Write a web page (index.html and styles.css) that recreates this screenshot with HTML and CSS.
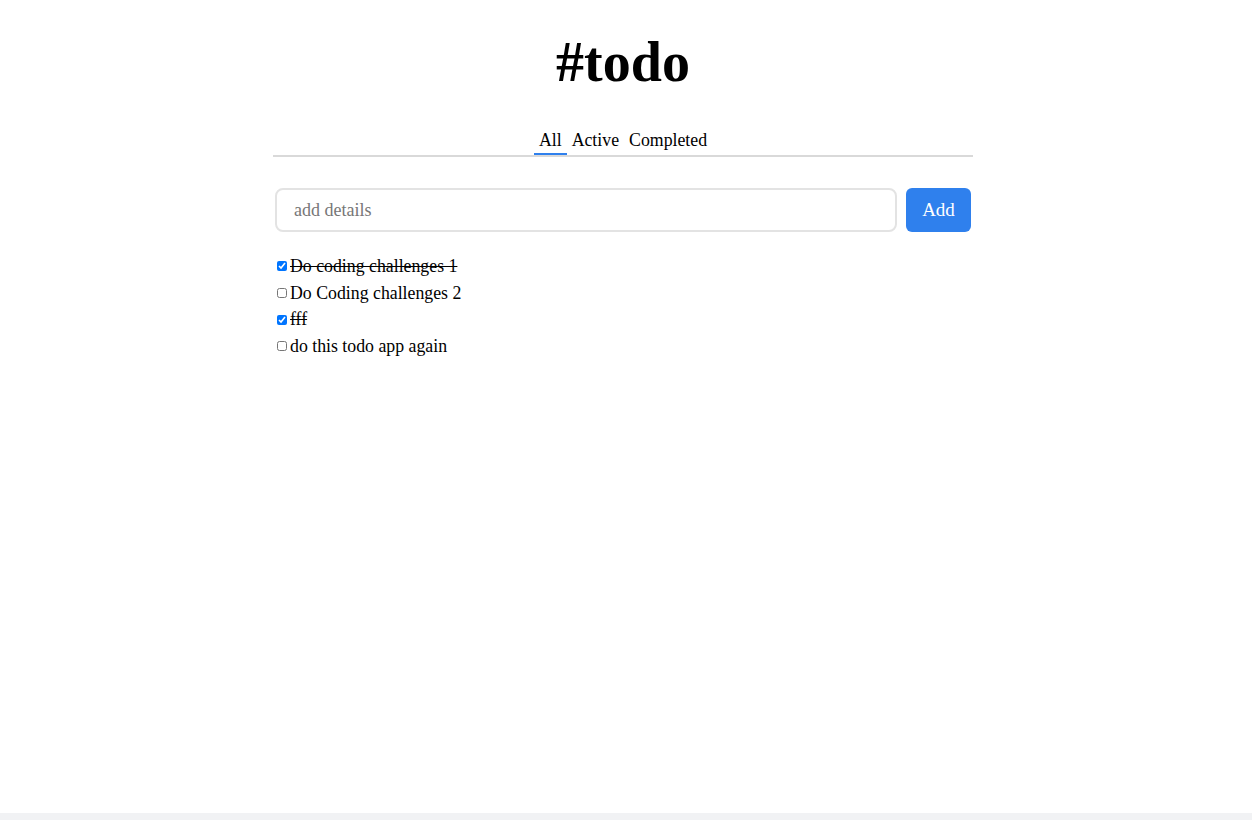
FILE: index.html
```html
<!DOCTYPE html>
<html lang="en">
<head>
<meta charset="utf-8">
<title>#todo</title>
<link rel="stylesheet" href="styles.css">
</head>
<body>
<div class="page">
  <div class="app">
    <h1 class="title">#todo</h1>
    <nav class="tabs">
      <span class="tab tab-active">All</span>
      <span class="tab">Active</span>
      <span class="tab">Completed</span>
    </nav>
    <form class="add-form">
      <input class="add-input" type="text" placeholder="add details">
      <button class="add-btn" type="button">Add</button>
    </form>
    <ul class="list">
      <li class="item done"><input type="checkbox" checked><span>Do coding challenges 1</span></li>
      <li class="item"><input type="checkbox"><span>Do Coding challenges 2</span></li>
      <li class="item done"><input type="checkbox" checked><span>fff</span></li>
      <li class="item"><input type="checkbox"><span>do this todo app again</span></li>
    </ul>
  </div>
</div>
</body>
</html>
```

FILE: styles.css
```css
html {
  background: #f1f2f4;
}
body {
  margin: 0;
  font-family: "Liberation Serif", "Times New Roman", serif;
  color: #000;
}
.page {
  background: #fff;
  min-height: 813px;
  padding-right: 6px;
  padding-top: 30px;
  box-sizing: border-box;
}
.app {
  width: 700px;
  margin: 0 auto;
}
.title {
  margin: 0;
  text-align: center;
  font-size: 56px;
  line-height: 64px;
  font-weight: bold;
}
.tabs {
  margin-top: 33px;
  display: flex;
  justify-content: center;
  border-bottom: 2px solid #d9d9d9;
}
.tab {
  font-size: 17.8px;
  line-height: 26px;
  padding: 0 5px;
  border-bottom: 2px solid transparent;
}
.tab-active {
  border-bottom-color: #2f80ed;
}
.add-form {
  margin: 31px 0 0;
  display: flex;
  gap: 9px;
  padding: 0 2px;
}
.add-input {
  flex: 1;
  height: 44px;
  box-sizing: border-box;
  border: 2px solid #e3e3e3;
  border-radius: 8px;
  padding: 0 17px;
  font-family: inherit;
  font-size: 18px;
  outline: none;
}
.add-input::placeholder {
  color: #777;
}
.add-btn {
  width: 65px;
  height: 44px;
  border: none;
  border-radius: 6px;
  background: #2f80ed;
  color: #fff;
  font-family: inherit;
  font-size: 19px;
}
.list {
  list-style: none;
  margin: 21px 0 0;
  padding: 0 0 0 3px;
}
.item {
  display: flex;
  align-items: center;
  font-size: 17.8px;
  height: 26.7px;
}
.item input {
  margin: 0 3px 0 1px;
  width: 10px;
  height: 10px;
}
.done span {
  text-decoration: line-through;
}
```
